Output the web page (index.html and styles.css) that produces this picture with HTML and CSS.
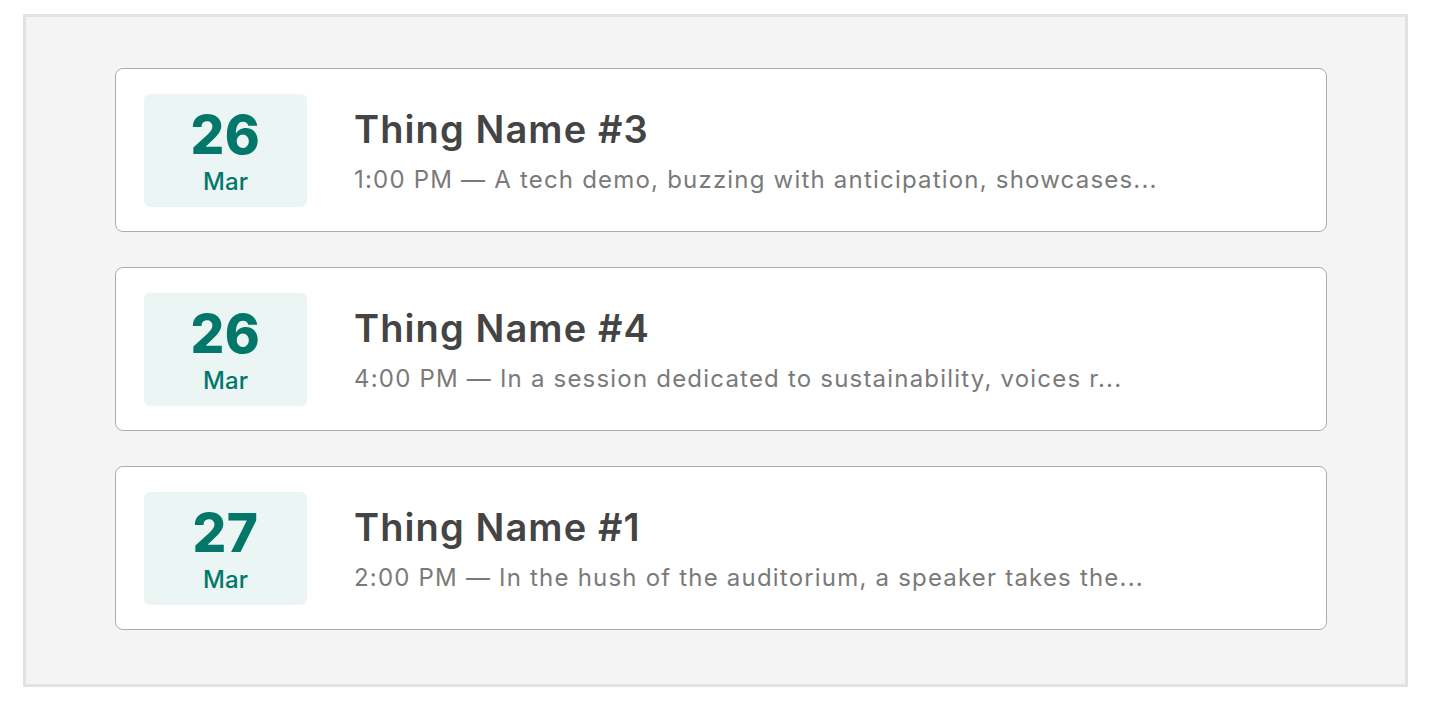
FILE: index.html
```html
<!DOCTYPE html>
<html>
<head>
<meta charset="utf-8">
<link rel="stylesheet" href="styles.css">
</head>
<body>
<div class="frame">
  <div class="list">
    <div class="card">
      <div class="date"><span class="day">26</span><span class="month">Mar</span></div>
      <div class="info">
        <div class="title">Thing Name #3</div>
        <div class="desc">1:00 PM — A tech demo, buzzing with anticipation, showcases...</div>
      </div>
    </div>
    <div class="card">
      <div class="date"><span class="day">26</span><span class="month">Mar</span></div>
      <div class="info">
        <div class="title">Thing Name #4</div>
        <div class="desc">4:00 PM — In a session dedicated to sustainability, voices r...</div>
      </div>
    </div>
    <div class="card">
      <div class="date"><span class="day">27</span><span class="month">Mar</span></div>
      <div class="info">
        <div class="title">Thing Name #1</div>
        <div class="desc">2:00 PM — In the hush of the auditorium, a speaker takes the...</div>
      </div>
    </div>
  </div>
</div>
</body>
</html>
```
FILE: styles.css
```css
html, body {
  margin: 0;
  padding: 0;
  background: #ffffff;
  font-family: Inter, "Noto Sans", "Liberation Sans", sans-serif;
}
.frame {
  box-sizing: border-box;
  margin: 14px 0 0 23px;
  width: 1385px;
  height: 673px;
  border: 3px solid #e2e2e2;
  background: #f4f4f4;
  padding: 51px 78px 0 89px;
}
.list {
  display: flex;
  flex-direction: column;
  gap: 35px;
}
.card {
  box-sizing: border-box;
  height: 164px;
  background: #fff;
  border: 1.5px solid #acacac;
  border-radius: 8px;
  padding: 25px 28px;
  display: flex;
  align-items: center;
  gap: 47px;
}
.date {
  flex: 0 0 auto;
  width: 163px;
  height: 113px;
  background: #ebf5f3;
  border-radius: 6px;
  display: flex;
  flex-direction: column;
  align-items: center;
  justify-content: center;
  color: #03786a;
}
.day {
  font-size: 53px;
  font-weight: 800;
  line-height: 1;
  margin-top: 3px;
  letter-spacing: 0.5px;
}
.month {
  font-size: 24px;
  font-weight: 500;
  line-height: 1;
  margin-top: 8px;
}
.info {
  display: flex;
  flex-direction: column;
  gap: 13px;
  margin-top: 2px;
}
.title {
  font-size: 38px;
  font-weight: 600;
  color: #444;
  line-height: 1.2;
  letter-spacing: 1.1px;
}
.desc {
  font-size: 24px;
  color: #7a7a7a;
  line-height: 1.2;
  letter-spacing: 1.2px;
}
```
